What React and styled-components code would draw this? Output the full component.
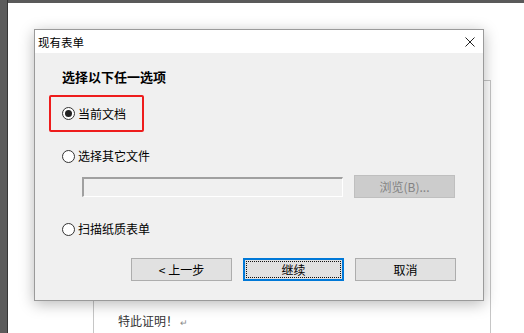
import React from "react";
import styled, { createGlobalStyle } from "styled-components";

const Global = createGlobalStyle`
  html, body { margin: 0; padding: 0; }
  body {
    width: 524px; height: 333px; overflow: hidden;
    font-family: "Noto Sans CJK SC", "Noto Sans", sans-serif;
    background: #fff;
  }
  * { box-sizing: border-box; }
`;

const Desktop = styled.div`
  position: relative;
  width: 524px;
  height: 333px;
  display: flex;
  overflow: hidden;
`;

const LeftStrip = styled.div`
  width: 8px;
  background: #5c5c5c;
  border-right: 1px solid #363636;
`;

const Workspace = styled.div`
  flex: 1;
  background: #fff;
  border-top: 3px solid #5a5a5a;
  padding: 77px 0 0 85px;
`;

const Page = styled.div`
  width: 398px;
  height: 100%;
  border: 1px solid #c6c6c6;
  border-bottom: none;
  padding: 232px 0 0 24px;
  font-size: 12px;
  line-height: 16px;
  color: #333;
`;

const Mark = styled.span`
  font-size: 9px;
  color: #888;
  margin-left: 2px;
`;

const Dialog = styled.div`
  position: absolute;
  left: 34px;
  top: 29px;
  width: 450px;
  height: 272px;
  border: 1px solid #9a9a9a;
  background: #f0f0f0;
  box-shadow: 0 3px 14px rgba(0, 0, 0, 0.28);
  display: flex;
  flex-direction: column;
`;

const TitleBar = styled.div`
  height: 23px;
  background: #fff;
  display: flex;
  align-items: center;
  justify-content: space-between;
  padding: 0 8px 0 3px;
  font-size: 11.5px;
  color: #000;
`;

const CloseIcon = styled.svg`
  width: 10px;
  height: 10px;
  display: block;
`;

const Body = styled.div`
  flex: 1;
  padding: 15px 27px 19px 27px;
  display: flex;
  flex-direction: column;
`;

const Heading = styled.div`
  font-size: 13px;
  font-weight: bold;
  line-height: 18px;
  color: #000;
`;

const Highlight = styled.div`
  margin: 9px 0 0 -13px;
  width: 95px;
  height: 37px;
  border: 2px solid #ee1c1c;
  border-radius: 2px;
  display: flex;
  align-items: center;
  padding-left: 11px;
`;

const RadioRow = styled.label`
  display: flex;
  align-items: center;
  height: 16px;
  margin-top: ${(p) => p.$mt || 0}px;
  font-size: 12px;
  line-height: 16px;
  color: #000;
`;

const Circle = styled.span`
  width: 13px;
  height: 13px;
  border-radius: 50%;
  border: 1px solid #333;
  background: #fff;
  margin-right: 3px;
  display: flex;
  align-items: center;
  justify-content: center;
  &::after {
    content: "";
    width: 7px;
    height: 7px;
    border-radius: 50%;
    background: ${(p) => (p.$checked ? "#222" : "transparent")};
  }
`;

const FileRow = styled.div`
  display: flex;
  align-items: center;
  gap: 11px;
  margin: 11px 0 0 20px;
  height: 23px;
`;

const TextBox = styled.div`
  width: 261px;
  height: 20px;
  background: #f0f0f0;
  border-top: 2px solid #a0a0a0;
  border-left: 2px solid #a0a0a0;
  border-right: 1px solid #fff;
  border-bottom: 1px solid #fff;
`;

const Button = styled.div`
  position: relative;
  width: 101px;
  height: 23px;
  display: flex;
  align-items: center;
  justify-content: center;
  font-size: 12px;
  color: ${(p) => (p.$disabled ? "#838383" : "#000")};
  background: ${(p) => (p.$disabled ? "#cccccc" : "#e1e1e1")};
  border: 1px solid ${(p) => (p.$disabled ? "#bfbfbf" : p.$focus ? "#0078d7" : "#adadad")};
  box-shadow: ${(p) => (p.$focus ? "inset 0 0 0 1px #0078d7" : "none")};
  &::after {
    content: "";
    display: ${(p) => (p.$focus ? "block" : "none")};
    position: absolute;
    inset: 2px;
    border: 1px dotted #111;
  }
`;

const Footer = styled.div`
  margin-top: auto;
  display: flex;
  justify-content: flex-end;
  gap: 11px;
`;

function Radio({ checked, children, mt }) {
  return (
    <RadioRow $mt={mt}>
      <Circle $checked={checked} />
      {children}
    </RadioRow>
  );
}

export default function App() {
  return (
    <>
      <Global />
      <Desktop>
        <LeftStrip />
        <Workspace>
          <Page>
            特此证明！<Mark>↵</Mark>
          </Page>
        </Workspace>
        <Dialog>
          <TitleBar>
            <span>现有表单</span>
            <CloseIcon viewBox="0 0 10 10">
              <path d="M0.5 0.5 L9.5 9.5 M9.5 0.5 L0.5 9.5" stroke="#222" strokeWidth="1" fill="none" />
            </CloseIcon>
          </TitleBar>
          <Body>
            <Heading>选择以下任一选项</Heading>
            <Highlight>
              <Radio checked>当前文档</Radio>
            </Highlight>
            <Radio mt={16}>选择其它文件</Radio>
            <FileRow>
              <TextBox />
              <Button $disabled>浏览(B)...</Button>
            </FileRow>
            <Radio mt={23}>扫描纸质表单</Radio>
            <Footer>
              <Button>&lt; 上一步</Button>
              <Button $focus>继续</Button>
              <Button>取消</Button>
            </Footer>
          </Body>
        </Dialog>
      </Desktop>
    </>
  );
}
